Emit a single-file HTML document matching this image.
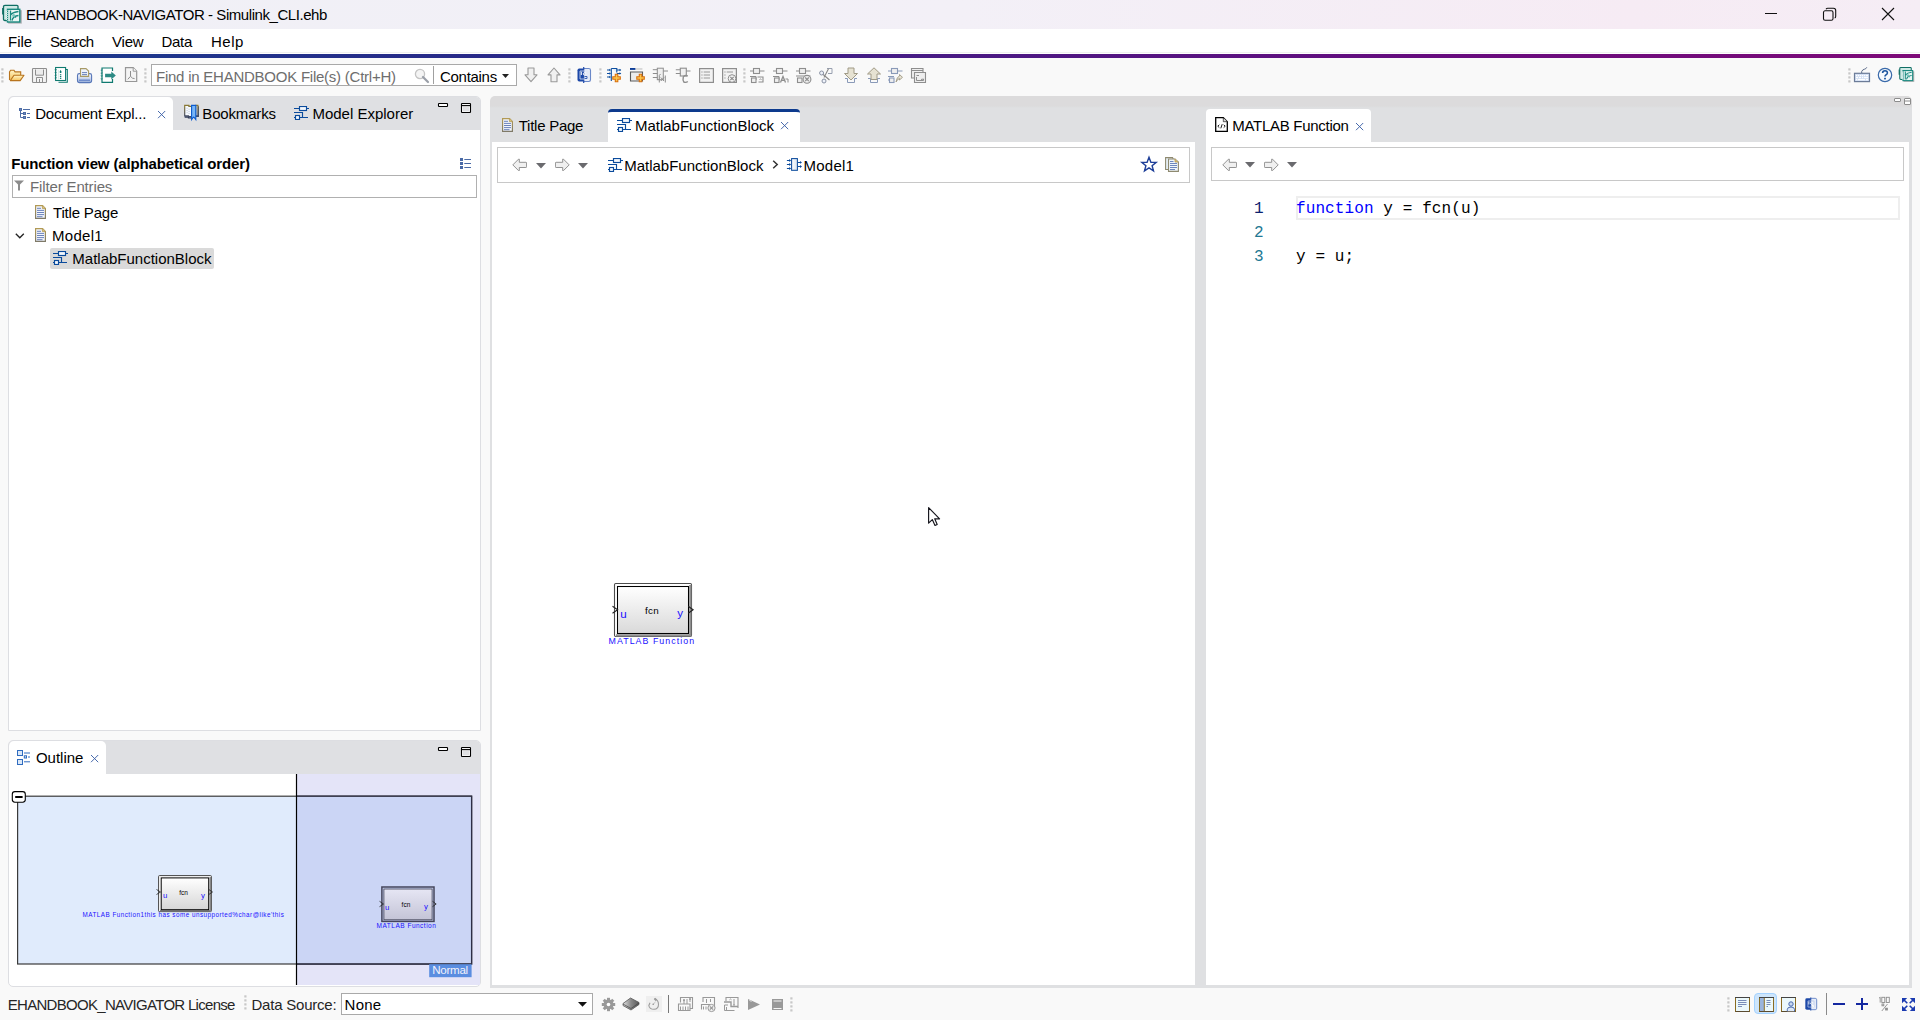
<!DOCTYPE html>
<html><head><meta charset="utf-8">
<style>
*{box-sizing:border-box;margin:0;padding:0}
html,body{width:1920px;height:1020px;overflow:hidden;background:#f9f9f9;font-family:"Liberation Sans",sans-serif;color:#000;position:relative}
.a{position:absolute}
.t{position:absolute;white-space:nowrap;line-height:15px;font-size:15px}
.ic{position:absolute;overflow:visible}
.code{font-family:"Liberation Mono",monospace}
</style></head><body>
<svg width="0" height="0" style="position:absolute">
<defs>
 <symbol id="blk" viewBox="0 0 15 14">
  <g fill="none" stroke="#0b4b9c" stroke-width="1.15">
   <path d="M0 2.5H15M0 6.5H8.5V11.5M0 11.5H14"/>
   <rect x="5.5" y="0.5" width="7" height="4" fill="#f4f8fd"/>
   <rect x="1.5" y="9.5" width="4" height="4" fill="#f4f8fd"/>
  </g>
 </symbol>
 <symbol id="doc" viewBox="0 0 11 14">
  <defs><linearGradient id="docb" x1="0" y1="0" x2="0" y2="1"><stop offset="0" stop-color="#b29a55"/><stop offset="1" stop-color="#7f7a68"/></linearGradient></defs>
  <path d="M0.6 0.6H7.6L10.4 3.4V13.4H0.6Z" fill="#f3f6fc" stroke="url(#docb)" stroke-width="1.2"/>
  <path d="M7.4 0.6V3.6H10.4" fill="#d9c07a" stroke="#b29a55" stroke-width="0.8"/>
  <g stroke="#5a74b2" stroke-width="0.9"><path d="M2 3.3H6M2 5.4H9M2 7.5H9M2 9.6H9M2 11.7H7.5"/></g>
 </symbol>
 <symbol id="xcl" viewBox="0 0 9 9">
  <path d="M1 1L8.2 8.2M8.2 1L1 8.2" stroke="#3d62a8" stroke-width="0.95" fill="none"/>
 </symbol>
 <symbol id="minb" viewBox="0 0 12 6">
  <rect x="1.5" y="1.5" width="9" height="3" rx="0.6" fill="#fff" stroke="#000" stroke-width="1.1"/>
 </symbol>
 <symbol id="maxb" viewBox="0 0 12 12">
  <rect x="1.5" y="1.5" width="9" height="9" rx="0.6" fill="none" stroke="#000" stroke-width="1.1"/>
  <rect x="2.5" y="4.5" width="7" height="5" fill="none" stroke="#fff" stroke-width="0.6"/>
  <path d="M2.3 2.5H9.7" stroke="#fff" stroke-width="0.7"/>
  <path d="M1.5 3.6H10.5" stroke="#000" stroke-width="1.1"/>
 </symbol>
 <symbol id="larr" viewBox="0 0 15 13">
  <path d="M0.8 6.9L6.6 1.1H7.3V4.3H13.9Q14.6 4.3 14.6 5V8.8Q14.6 9.5 13.9 9.5H7.3V12.7H6.6Z" fill="#f0f0f0" stroke="#8c8c8c" stroke-width="0.95" stroke-linejoin="round"/>
 </symbol>
 <symbol id="rarr" viewBox="0 0 15 13">
  <path d="M14.2 6.9L8.4 1.1H7.7V4.3H1.1Q0.4 4.3 0.4 5V8.8Q0.4 9.5 1.1 9.5H7.7V12.7H8.4Z" fill="#f0f0f0" stroke="#8c8c8c" stroke-width="0.95" stroke-linejoin="round"/>
 </symbol>
 <symbol id="tri" viewBox="0 0 10 6">
  <path d="M0 0H10L5 5.5Z" fill="#6a6a6e"/>
 </symbol>
 <symbol id="grip" viewBox="0 0 3 15">
  <g fill="#c8c8c8"><rect x="0.3" y="0.3" width="2.2" height="2.2"/><rect x="0.3" y="4.3" width="2.2" height="2.2"/><rect x="0.3" y="8.3" width="2.2" height="2.2"/><rect x="0.3" y="12.3" width="2.2" height="2.2"/></g>
 </symbol>
 <symbol id="app" viewBox="0 0 24 24">
  <path d="M3.5 5.8Q3.5 4.3 5 4.3H17Q18 4.3 18 5.3V19.5H5Q3.5 19.5 3.5 18Z" fill="#cfe9e5" stroke="#0f6e64" stroke-width="1.3"/>
  <path d="M2.8 7V13.5" stroke="#0f6e64" stroke-width="1.4"/>
  <rect x="8.2" y="9.2" width="13.6" height="13.4" fill="#000" opacity="0.28"/>
  <rect x="7.5" y="8.3" width="12.3" height="12.7" fill="#e8f5f3" stroke="#1a8a80" stroke-width="1.4"/>
  <path d="M7.5 9.5L6.3 10.5L7.5 11.5L6.3 12.5L7.5 13.5L6.3 14.5L7.5 15.5L6.3 16.5L7.5 17.5L6.3 18.5L7.5 19.5" fill="none" stroke="#fff" stroke-width="0.9"/>
  <path d="M10.5 9.5V19.5M10.5 14Q13 11 18.5 10.5M12 19.5Q13 15 18.5 14.5M13.5 14.3L16 16.5" stroke="#1a8a80" stroke-width="1.3" fill="none"/>
  <circle cx="13.7" cy="14.5" r="1.6" fill="#7cc4bb"/>
 </symbol>
</defs></svg>
<!-- TITLE BAR -->
<div class="a" style="left:0;top:0;width:1920px;height:29px;background:linear-gradient(90deg,#f0f0f6 0%,#f3f0f7 50%,#f6ebf4 85%,#f5edf5 100%)"></div>
<div class="t" style="left:26px;top:7.3px;letter-spacing:-0.44px">EHANDBOOK-NAVIGATOR - Simulink_CLI.ehb</div>
<svg class="ic" style="left:0px;top:1px" width="24" height="24"><use href="#app"/></svg>
<div class="a" style="left:1765px;top:13px;width:12px;height:1px;background:#111"></div>
<svg class="ic" style="left:1822px;top:7px" width="15" height="15" viewBox="0 0 15 15"><rect x="1.5" y="3.8" width="9.5" height="9.5" rx="1.6" fill="none" stroke="#111" stroke-width="1.1"/><path d="M4 2.2Q4.5 1.3 5.8 1.3H11.5Q13.7 1.3 13.7 3.5V9.2Q13.7 10.6 12.7 11.1" fill="none" stroke="#111" stroke-width="1.1"/></svg>
<svg class="ic" style="left:1881px;top:7px" width="14" height="14" viewBox="0 0 14 14"><path d="M1 1L13 13M13 1L1 13" stroke="#111" stroke-width="1.1"/></svg>
<!-- MENU -->
<div class="a" style="left:0;top:29px;width:1920px;height:25px;background:#fff"></div>
<div class="t" style="left:8px;top:34.3px">File</div>
<div class="t" style="left:50px;top:34.3px;letter-spacing:-0.69px">Search</div>
<div class="t" style="left:112px;top:34.3px;letter-spacing:-0.22px">View</div>
<div class="t" style="left:161.5px;top:34.3px;letter-spacing:-0.28px">Data</div>
<div class="t" style="left:211px;top:34.3px;letter-spacing:0.5px">Help</div>
<div class="a" style="left:0;top:52px;width:1920px;height:1px;background:#f0f0f0"></div>
<div class="a" style="left:0;top:54px;width:1920px;height:4px;background:linear-gradient(90deg,#1a3c8e 0%,#2a2888 27%,#4a1a84 50%,#660c7e 74%,#7e0a78 100%)"></div>

<!-- TOOLBAR -->
<div class="a" style="left:151px;top:64px;width:366px;height:22px;border:1px solid #a9a9a9;background:#fff"></div>
<div class="t" style="left:156px;top:68.6px;letter-spacing:-0.24px;color:#6e6e6e">Find in EHANDBOOK File(s) (Ctrl+H)</div>
<div class="a" style="left:433px;top:66px;width:1px;height:18px;background:#a0a0a0"></div>
<div class="t" style="left:440px;top:68.6px;letter-spacing:-0.29px">Contains</div>

<!-- TOOLBAR ICONS -->
<svg class="ic" style="left:1px;top:68px" width="3" height="15"><use href="#grip"/></svg>
<svg class="ic" style="left:8px;top:68px" width="17" height="14" viewBox="0 0 17 14"><defs><linearGradient id="fo1" x1="0" y1="0" x2="0" y2="1"><stop offset="0" stop-color="#fff6c8"/><stop offset="1" stop-color="#f6c25a"/></linearGradient></defs><path d="M1.5 12V4L2.6 2.3H6L7 3.9H12.7V7" fill="url(#fo1)" stroke="#b8741e" stroke-width="1.1"/><path d="M2.3 12.6L6 7.3H16L12.2 12.6Z" fill="url(#fo1)" stroke="#b8741e" stroke-width="1.1" stroke-linejoin="round"/></svg>
<svg class="ic" style="left:31px;top:67px" width="17" height="17" viewBox="0 0 17 17"><path d="M2.3 1.5H14.7Q15.5 1.5 15.5 2.3V14.7Q15.5 15.5 14.7 15.5H2.3Q1.5 15.5 1.5 14.7V2.3Q1.5 1.5 2.3 1.5Z" fill="#f3f3f3" stroke="#8e8e8e" stroke-width="1.1"/><path d="M4.5 2.5V8.2H12.5V2.5" fill="#ececec" stroke="#8e8e8e" stroke-width="1"/><path d="M5.5 15.3V10.5H11.5V15.3M8.5 12V15.3" fill="none" stroke="#8e8e8e" stroke-width="1"/></svg>
<svg class="ic" style="left:53px;top:66px" width="17" height="18" viewBox="0 0 17 18"><path d="M5 3.5H14.3V16.3H5.5" fill="#fff" stroke="#0f7a70" stroke-width="1.1"/><rect x="2.6" y="1.5" width="10" height="13" fill="#fff" stroke="#0f7a70" stroke-width="1.1"/><g fill="#0f7a70"><path d="M1.3 3.8L3.8 3L3 5ZM1.3 6.5L3.8 5.7L3 7.7ZM1.3 9.2L3.8 8.4L3 10.4ZM1.3 11.9L3.8 11.1L3 13.1Z"/><path d="M6.8 5.5L7.6 3.8L8.4 5.5V7H6.8Z"/><rect x="6.9" y="8.2" width="1.4" height="1.1"/><rect x="6.9" y="10" width="1.4" height="1.1"/><rect x="6.9" y="11.8" width="1.4" height="1.1"/></g><path d="M5.4 4V13.5" stroke="#cfe6e2" stroke-width="0.8"/></svg>
<svg class="ic" style="left:76px;top:67px" width="17" height="17" viewBox="0 0 17 17"><defs><linearGradient id="pr1" x1="0" y1="0" x2="0" y2="1"><stop offset="0" stop-color="#fbfcff"/><stop offset="1" stop-color="#9fb4dc"/></linearGradient></defs><path d="M1.5 8.5Q1.5 6.6 3.3 6.6H13.8Q15.6 6.6 15.6 8.5V13.5Q15.6 15.6 13.5 15.6H3.6Q1.5 15.6 1.5 13.5Z" fill="url(#pr1)" stroke="#5877b8" stroke-width="1.1"/><path d="M3 13.3H14" stroke="#6f8dcc" stroke-width="1.6"/><path d="M4.5 9.4V1.6H10L12.6 4V9.4Z" fill="#eef3fc" stroke="#a89a66" stroke-width="1.1"/><path d="M6 5.6H11M6 7.6H11" stroke="#5a74b2" stroke-width="0.9"/></svg>
<svg class="ic" style="left:99px;top:66px" width="18" height="18" viewBox="0 0 18 18"><path d="M13.5 5V2H3V16.3H13.5V13" fill="#fff" stroke="#0f7a70" stroke-width="1.2"/><g fill="#2c8a84"><path d="M1.3 4L3.7 3.3L3 5.3ZM1.3 6.9L3.7 6.2L3 8.2ZM1.3 9.8L3.7 9.1L3 11.1ZM1.3 12.7L3.7 12L3 14Z"/><path d="M6.1 7.8H12.3V5.6L16.8 9.5L12.3 13.4V11.3H6.1Z"/></g></svg>
<svg class="ic" style="left:124px;top:66px" width="14" height="17" viewBox="0 0 14 17"><path d="M1.5 1.7H9.2L12.7 5.2V15.5H1.5Z" fill="#f4f4f4" stroke="#979797" stroke-width="1.2"/><path d="M9.2 1.7V5.2H12.7" fill="#fff" stroke="#979797" stroke-width="1"/><path d="M6.5 5V10.3L3.8 13.3M6.5 10.3L8.5 12.2L10.6 12.6" fill="none" stroke="#8f8f8f" stroke-width="1"/></svg>
<svg class="ic" style="left:144px;top:68px" width="3" height="15"><use href="#grip"/></svg>
<svg class="ic" style="left:413px;top:67px" width="17" height="17" viewBox="0 0 17 17"><circle cx="7" cy="7" r="4.6" fill="#f4f4f4" stroke="#c4c4c4" stroke-width="1.3"/><path d="M10 10L15 15" stroke="#9a9fa8" stroke-width="2.2" stroke-linecap="round"/></svg>
<svg class="ic" style="left:502px;top:74px" width="7" height="4" viewBox="0 0 7 4"><path d="M0 0H7L3.5 4Z" fill="#222"/></svg>
<svg class="ic" style="left:524px;top:67px" width="14" height="16" viewBox="0 0 14 16"><path d="M4 1H10V7.8H13L7 14.7L1 7.8H4Z" fill="#f0f0f0" stroke="#9a9a9a" stroke-width="1.1" stroke-linejoin="round"/></svg>
<svg class="ic" style="left:547px;top:67px" width="14" height="16" viewBox="0 0 14 16"><path d="M4 14.7H10V7.9H13L7 1L1 7.9H4Z" fill="#f0f0f0" stroke="#9a9a9a" stroke-width="1.1" stroke-linejoin="round"/></svg>
<svg class="ic" style="left:568px;top:68px" width="3" height="15"><use href="#grip"/></svg>
<svg class="ic" style="left:576px;top:66px" width="16" height="18" viewBox="0 0 16 18"><path d="M7.5 2.5H3.2Q1.5 2.5 1.5 4.2V13.8Q1.5 15.5 3.2 15.5H7.5Z" fill="#1c48a8"/><path d="M8 2.5H12.8Q14.5 2.5 14.5 4.2V13.8Q14.5 15.5 12.8 15.5H8" fill="#e6ecf8" stroke="#6a88c8" stroke-width="1.1"/><path d="M7.7 1V17" stroke="#1c48a8" stroke-width="1.2"/><path d="M4 5H11.8V13H4Z" fill="none" stroke="#dfe6f5" stroke-width="0.8"/><path d="M5.3 5.8V9M9.8 7Q8.2 6 7.3 7.5Q7.2 9 8.8 9.2" fill="none" stroke="#fff" stroke-width="1"/><path d="M8.6 10.5H11V12.5H8.6" fill="none" stroke="#2a56b0" stroke-width="0.9"/></svg>
<svg class="ic" style="left:599px;top:68px" width="3" height="15"><use href="#grip"/></svg>
<svg class="ic" style="left:606px;top:67px" width="17" height="17" viewBox="0 0 17 17"><path d="M5.3 1.5V14M5.3 1.5H10.8V5.5" fill="#e4eef8" stroke="#0d4ea0" stroke-width="1.1"/><g stroke="#0d4ea0" stroke-width="1.1"><path d="M1 3H4M1 6.5H4M1 10H4M10.8 3H14.5M10.8 6.5H14.5"/></g><g fill="#0d4ea0"><path d="M3.3 1.8L5 3L3.3 4.2ZM3.3 5.3L5 6.5L3.3 7.7ZM3.3 8.8L5 10L3.3 11.2ZM13.5 1.8L15.3 3L13.5 4.2ZM13.5 5.3L15.3 6.5L13.5 7.7Z"/></g><path d="M9.3 7.3H11.8V9.8H14.3V12.3H11.8V14.8H9.3V12.3H6.8V9.8H9.3Z" fill="#fbc64c" stroke="#d9700e" stroke-width="1.1"/></svg>
<svg class="ic" style="left:629px;top:67px" width="17" height="17" viewBox="0 0 17 17"><path d="M1.5 5V14H13.5V5Z" fill="#ececec" stroke="#5a5a5a" stroke-width="1.1"/><rect x="1" y="1" width="5.6" height="1.9" fill="#0d3e98"/><rect x="6.6" y="1" width="6.8" height="1.9" fill="#d8d8d8"/><path d="M10.3 7.3H12.8V9.8H15.3V12.3H12.8V14.8H10.3V12.3H7.8V9.8H10.3Z" fill="#fbc64c" stroke="#d9700e" stroke-width="1.1"/></svg>
<svg class="ic" style="left:652px;top:67px" width="17" height="17" viewBox="0 0 17 17"><g fill="none" stroke="#8e8e8e" stroke-width="1"><rect x="5.3" y="1.2" width="6" height="11.5" fill="#f0f0f0"/><path d="M0.8 2.7H5.3M0.8 6.5H5.3M0.8 10.5H5.3M11.3 4H16M7.3 15.5V8.5L8.5 7M13.3 15.5V8.5"/><path d="M8.8 10.5L12 14M12 10.5L8.8 14"/></g></svg>
<svg class="ic" style="left:675px;top:67px" width="17" height="17" viewBox="0 0 17 17"><g fill="none" stroke="#8e8e8e" stroke-width="1.1"><rect x="5.3" y="1.2" width="6" height="7.8" fill="#f0f0f0"/><path d="M0.8 2.7H5.3M0.8 6.5H5.3M11.3 4H15.5"/><path d="M12.8 9Q9.5 7.5 8.3 10Q7.5 13.5 8.8 15Q11 16 12.8 14.5" stroke-width="1.4"/></g></svg>
<svg class="ic" style="left:698px;top:67px" width="17" height="17" viewBox="0 0 17 17"><rect x="1.6" y="1.6" width="13.8" height="13.8" fill="#f2f2f2" stroke="#8e8e8e" stroke-width="1.2"/><path d="M3.3 5H4.6M5.7 5H12M3.3 8H4.6M5.7 8H12M3.3 11H4.6M5.7 11H12" stroke="#8e8e8e" stroke-width="0.9"/></svg>
<svg class="ic" style="left:721px;top:67px" width="17" height="17" viewBox="0 0 17 17"><rect x="1.6" y="1.6" width="13.8" height="13.8" fill="#f2f2f2" stroke="#8e8e8e" stroke-width="1.2"/><path d="M3.3 5H4.6M5.7 5H12M3.3 8H4.6M3.3 11H4.6" stroke="#8e8e8e" stroke-width="0.9"/><circle cx="11" cy="11.5" r="3.8" fill="#f4f4f4" stroke="#8e8e8e" stroke-width="1"/><path d="M9.3 9.8L12.7 13.2M12.7 9.8L9.3 13.2" stroke="#8e8e8e" stroke-width="1.2"/></svg>
<svg class="ic" style="left:743px;top:68px" width="3" height="15"><use href="#grip"/></svg>
<svg class="ic" style="left:749px;top:67px" width="17" height="17" viewBox="0 0 17 17"><g fill="none" stroke="#8e8e8e" stroke-width="1.1"><path d="M1 4H4.5M10.5 4H15.5M1 9.5H7M7 9.5V13"/><rect x="4.5" y="1.5" width="6" height="5" fill="#efefef"/><rect x="2.5" y="11" width="4.5" height="4.5" fill="#efefef"/></g><path d="M8.5 10H14V15H9.5" fill="none" stroke="#8e8e8e" stroke-width="1.1"/><path d="M10.5 12.5Q11.5 11.5 12.5 12.5" stroke="#8e8e8e" fill="none"/></svg>
<svg class="ic" style="left:772px;top:67px" width="17" height="17" viewBox="0 0 17 17"><g fill="none" stroke="#8e8e8e" stroke-width="1.1"><path d="M1 4H4.5M10.5 4H15.5M1 9.5H7M7 9.5V13"/><rect x="4.5" y="1.5" width="6" height="5" fill="#efefef"/><rect x="2.5" y="11" width="4.5" height="4.5" fill="#efefef"/></g><path d="M8.5 15.5L11 9.5L13.5 15.5M9.5 13.3H12.5" fill="none" stroke="#8e8e8e" stroke-width="1.3"/><path d="M13.5 12H16V15.5" stroke="#8e8e8e" fill="none"/></svg>
<svg class="ic" style="left:795px;top:67px" width="17" height="17" viewBox="0 0 17 17"><g fill="none" stroke="#8e8e8e" stroke-width="1.1"><path d="M1 4H4.5M10.5 4H15.5M1 9H15.5"/><rect x="4.5" y="1.5" width="6" height="5" fill="#efefef"/><rect x="2.5" y="11" width="4.5" height="4.5" fill="#efefef"/></g><circle cx="12" cy="12.3" r="3.9" fill="#eee" stroke="#8e8e8e" stroke-width="1.1"/><path d="M10.2 10.5L13.8 14.1M13.8 10.5L10.2 14.1" stroke="#8e8e8e" stroke-width="1.2"/></svg>
<svg class="ic" style="left:818px;top:67px" width="17" height="17" viewBox="0 0 17 17"><path d="M9 1.5H14V6.5M14 6.5H10" fill="none" stroke="#98a0b0" stroke-width="1"/><path d="M10.5 1.8L6 10.5M4 6.5L11.5 13" stroke="#8a8a8a" stroke-width="1.1"/><circle cx="3.6" cy="6" r="2" fill="#eef2fa" stroke="#8a92a4" stroke-width="1"/><circle cx="6" cy="14" r="2" fill="#eef2fa" stroke="#8a92a4" stroke-width="1"/></svg>
<svg class="ic" style="left:843px;top:67px" width="16" height="17" viewBox="0 0 16 17"><path d="M2 11.5H4.5M11.5 11.5H14M4.5 11.5V15.5H11.5V11.5" fill="none" stroke="#8a9ab8" stroke-width="1"/><path d="M5 1H11V6.5H14.5L8 13L1.5 6.5H5Z" fill="#e6e2d2" stroke="#a09a86" stroke-width="1"/></svg>
<svg class="ic" style="left:866px;top:67px" width="16" height="17" viewBox="0 0 16 17"><path d="M2 11.5H4.5M11.5 11.5H14M4.5 11.5V15.5H11.5V11.5" fill="none" stroke="#8a9ab8" stroke-width="1"/><path d="M5 12.5H11V7H14.5L8 0.8L1.5 7H5Z" fill="#e6e2d2" stroke="#a09a86" stroke-width="1"/></svg>
<svg class="ic" style="left:887px;top:67px" width="17" height="17" viewBox="0 0 17 17"><g fill="none" stroke="#8a9ab8" stroke-width="1.1"><path d="M1 4H4.5M10.5 4H15.5M1 9.5H7M1 13H2.5"/><rect x="4.5" y="1.5" width="6" height="5" fill="#efefef"/><rect x="2.5" y="11" width="4.5" height="4.5" fill="#efefef"/></g><path d="M9 15Q10 9.5 12.5 9V7.5L15.5 10.3L12.5 13V11.5Q10.5 12 9 15Z" fill="#e6e2d2" stroke="#a09a86" stroke-width="0.9"/></svg>
<svg class="ic" style="left:910px;top:67px" width="17" height="17" viewBox="0 0 17 17"><path d="M1.5 1.5H13V11H1.5Z" fill="#efefef" stroke="#8e8e8e" stroke-width="1.1"/><path d="M1.5 3.5H13" stroke="#8e8e8e" stroke-width="1"/><path d="M4.5 5.5H15.5V15.5H4.5Z" fill="#eeeeee" stroke="#8e8e8e" stroke-width="1.1"/><path d="M6.5 8.5H9M6.5 10V13.5H13.5V12L11 12.5" fill="none" stroke="#8e8e8e" stroke-width="1"/></svg>
<!-- right toolbar -->
<svg class="ic" style="left:1897px;top:64px" width="19" height="19" viewBox="0 0 24 24"><use href="#app"/></svg>
<svg class="ic" style="left:1848px;top:68px" width="3" height="15"><use href="#grip"/></svg>
<svg class="ic" style="left:1853px;top:66px" width="18" height="17" viewBox="0 0 18 17"><path d="M8.7 7V5.5Q9.5 3.5 11.5 3.2Q13 3 13.8 1.3" fill="none" stroke="#5a6a88" stroke-width="1"/><rect x="1.5" y="7.3" width="15" height="8.3" fill="#d4e0f4" stroke="#6c7c98" stroke-width="1.2"/><g fill="#fff"><rect x="3" y="9" width="1.2" height="1.2"/><rect x="5" y="9" width="1.2" height="1.2"/><rect x="7" y="9" width="1.2" height="1.2"/><rect x="9" y="9" width="1.2" height="1.2"/><rect x="11" y="9" width="1.2" height="1.2"/><rect x="13" y="9" width="2" height="1.2"/><rect x="3" y="11" width="2" height="1.2"/><rect x="6" y="11" width="2" height="1.2"/><rect x="9" y="11" width="1.2" height="1.2"/><rect x="11" y="11" width="4" height="1.2"/><rect x="3" y="13" width="1.2" height="1.2"/><rect x="5" y="13" width="7" height="1.2"/><rect x="13" y="13" width="2" height="1.2"/></g></svg>
<svg class="ic" style="left:1877px;top:67px" width="16" height="16" viewBox="0 0 16 16"><circle cx="8" cy="8" r="6.7" fill="#f6f9fd" stroke="#3a6aaa" stroke-width="1.2"/><path d="M5.6 6.1Q5.6 3.8 8 3.8Q10.5 3.8 10.4 6Q10.3 7.3 8.8 8Q8 8.4 8 9.6" fill="none" stroke="#1e56a0" stroke-width="1.6"/><rect x="7.1" y="10.8" width="1.8" height="1.6" fill="#1e56a0"/></svg>
<!-- LEFT PANEL -->
<div class="a" style="left:8px;top:96px;width:473px;height:635px;background:#fff;border:1px solid #dddee2;border-radius:5px 5px 0 0;overflow:hidden">
  <div class="a" style="left:0;top:0;width:473px;height:33px;background:#dfe0e3"></div>
  <div class="a" style="left:0;top:0;width:164px;height:33px;background:#fff;border-radius:5px 5px 0 0"></div>
</div>
<div class="t" style="left:35.2px;top:106.3px;letter-spacing:-0.2px">Document Expl...</div>
<div class="t" style="left:202.3px;top:106.3px;letter-spacing:-0.17px">Bookmarks</div>
<div class="t" style="left:312.4px;top:106.3px">Model Explorer</div>
<div class="t" style="left:11.2px;top:156.1px;font-weight:bold;letter-spacing:-0.14px">Function view (alphabetical order)</div>
<div class="a" style="left:12px;top:175px;width:465px;height:23px;border:1px solid #b0b0b0;background:#fff"></div>
<div class="t" style="left:30.1px;top:179.3px;letter-spacing:-0.15px;color:#6e6e6e">Filter Entries</div>
<div class="t" style="left:53px;top:204.9px;letter-spacing:-0.18px">Title Page</div>
<div class="t" style="left:52px;top:228.3px;letter-spacing:0.3px">Model1</div>
<div class="a" style="left:50px;top:248px;width:164px;height:21px;background:#dadada;border-radius:2px"></div>
<div class="t" style="left:72.3px;top:251.3px">MatlabFunctionBlock</div>

<!-- OUTLINE PANEL -->
<div class="a" style="left:8px;top:740px;width:473px;height:247px;background:#fff;border:1px solid #dddee2;border-radius:5px;overflow:hidden">
  <div class="a" style="left:0;top:0;width:473px;height:33px;background:#dfe0e3"></div>
  <div class="a" style="left:0;top:0;width:97px;height:33px;background:#fff;border-radius:5px 5px 0 0"></div>
</div>
<div class="t" style="left:35.9px;top:750.3px">Outline</div>

<!-- EDITOR AREA -->
<div class="a" style="left:490px;top:96px;width:1422px;height:892px;background:linear-gradient(180deg,#dcdbdc 0px,#dcdbdc 10px,#dfe0e2 12px);border-radius:5px 5px 0 0"></div>
<div class="a" style="left:492px;top:142px;width:703px;height:843px;background:#fff"></div>
<div class="a" style="left:608px;top:109px;width:192px;height:33px;background:#fff;border-top:3px solid #0d3a8d;border-radius:4px 4px 0 0"></div>
<div class="t" style="left:518.7px;top:117.8px;letter-spacing:-0.25px">Title Page</div>
<div class="t" style="left:634.9px;top:117.8px">MatlabFunctionBlock</div>
<div class="a" style="left:497px;top:147px;width:693px;height:36px;border:1px solid #c8c8c8"></div>
<div class="t" style="left:624.2px;top:157.5px">MatlabFunctionBlock</div>
<div class="t" style="left:803.4px;top:157.5px;letter-spacing:0.27px">Model1</div>

<div class="a" style="left:1206px;top:142px;width:703px;height:843px;background:#fff"></div>
<div class="a" style="left:1206px;top:109px;width:165px;height:33px;background:#fff;border-radius:4px 4px 0 0"></div>
<div class="t" style="left:1232.2px;top:118.4px;letter-spacing:-0.28px">MATLAB Function</div>
<div class="a" style="left:1211px;top:147px;width:693px;height:34px;border:1px solid #c8c8c8"></div>

<!-- CODE -->
<div class="a" style="left:1296px;top:196px;width:604px;height:24px;border:2px solid #eeeeee"></div>
<div class="t code" style="left:1254px;top:201.3px;font-size:16px;line-height:16px;color:#0b216f">1</div>
<div class="t code" style="left:1254px;top:224.9px;font-size:16px;line-height:16px;color:#237893">2</div>
<div class="t code" style="left:1254px;top:248.6px;font-size:16px;line-height:16px;color:#237893">3</div>
<div class="t code" style="left:1296px;top:201.3px;font-size:16px;line-height:16px;letter-spacing:0.1px"><span style="color:#0000ff">function</span> y = fcn(u)</div>
<div class="t code" style="left:1296px;top:248.6px;font-size:16px;line-height:16px;letter-spacing:0.1px">y = u;</div>
<!-- SIMULINK BLOCK CENTER -->
<svg class="ic" style="left:600px;top:575px" width="100" height="75" viewBox="600 575 100 75">
 <defs><linearGradient id="bg1" x1="0" y1="0" x2="0" y2="1"><stop offset="0" stop-color="#ffffff"/><stop offset="1" stop-color="#d9d9d9"/></linearGradient></defs>
 <rect x="614.5" y="583.5" width="77" height="53" rx="1.2" fill="#fff" stroke="#4d4d4d" stroke-width="1.1"/>
 <path d="M690.3 585V635.3H616" fill="none" stroke="#8f8f8f" stroke-width="2.2"/>
 <rect x="617.5" y="586.5" width="71" height="47" fill="url(#bg1)" stroke="#000" stroke-width="1.05"/>
 <path d="M612.5 606.3L617.6 609.8L612.5 613.3" fill="none" stroke="#222" stroke-width="1.1"/>
 <path d="M688.2 606.3L693.1 609.8L688.2 613.3" fill="none" stroke="#222" stroke-width="1.1"/>
 <text x="645" y="613.6" font-family="Liberation Sans" font-size="9.8" fill="#000" letter-spacing="0.3">fcn</text>
 <text x="620.3" y="617.6" font-family="Liberation Sans" font-size="11.6" fill="#2010ff">u</text>
 <text x="677.3" y="616.6" font-family="Liberation Sans" font-size="11.6" fill="#2010ff">y</text>
 <text x="608.6" y="643.7" font-family="Liberation Sans" font-size="8.8" fill="#2010ff" letter-spacing="1.05">MATLAB Function</text>
</svg>
<!-- CURSOR -->
<svg class="ic" style="left:926px;top:505px" width="16" height="23" viewBox="0 0 16 23"><path d="M2.6 2.6V18.2L6.3 14.6L9 20.4L11.2 19.4L8.7 13.8H13.6Z" fill="#fff" stroke="#15151c" stroke-width="1.15" stroke-linejoin="round"/></svg>
<!-- OUTLINE DIAGRAM -->
<svg class="ic" style="left:9px;top:774px" width="471" height="211" viewBox="9 774 471 211">
 <defs>
  <linearGradient id="bg2" x1="0" y1="0" x2="0" y2="1"><stop offset="0" stop-color="#ffffff"/><stop offset="1" stop-color="#d6d6d6"/></linearGradient>
  <linearGradient id="bg3" x1="0" y1="0" x2="0" y2="1"><stop offset="0" stop-color="#e6e6f4"/><stop offset="1" stop-color="#c4c4d6"/></linearGradient>
 </defs>
 <rect x="297" y="774" width="183" height="211" fill="#e4e4f8"/>
 <rect x="17.6" y="796.2" width="454" height="167.8" fill="#e0ebfc" stroke="#3a3a3a" stroke-width="1.2"/>
 <rect x="297" y="796.8" width="174" height="166.6" fill="#cbd5f5"/>
 <path d="M297 796.2H471.6V964H297" fill="none" stroke="#2f2f45" stroke-width="1.3"/>
 <path d="M296.5 774V985" stroke="#000" stroke-width="1.2"/>
 <rect x="12.3" y="791.6" width="13" height="10.6" rx="2.6" fill="#fff" stroke="#000" stroke-width="1.1"/>
 <path d="M15.2 797H22.6" stroke="#000" stroke-width="2"/>
 <!-- block 1 -->
 <rect x="158.6" y="875.6" width="52.8" height="36" rx="0.8" fill="#fff" stroke="#444" stroke-width="1"/>
 <path d="M210.4 877V910.8H160" fill="none" stroke="#888" stroke-width="1.6"/>
 <rect x="161.2" y="877.9" width="47.5" height="31.8" fill="url(#bg2)" stroke="#000" stroke-width="1"/>
 <path d="M156.5 889.5L160.5 892L156.5 894.5M208.8 889.5L212.5 892L208.8 894.5" fill="none" stroke="#222" stroke-width="0.8"/>
 <text x="179.2" y="895" font-family="Liberation Sans" font-size="6.5" fill="#000">fcn</text>
 <text x="163" y="898.3" font-family="Liberation Sans" font-size="7.8" fill="#2010ff">u</text>
 <text x="201" y="897.5" font-family="Liberation Sans" font-size="7.8" fill="#2010ff">y</text>
 <text x="82.5" y="916.8" font-family="Liberation Sans" font-size="6.3" fill="#2010ff" letter-spacing="0.49">MATLAB Function1this has some unsupported%char@like'this</text>
 <!-- block 2 -->
 <rect x="381.9" y="887" width="52.1" height="34.4" fill="none" stroke="#44445a" stroke-width="1.5"/>
 <rect x="383.9" y="889" width="48.2" height="30.8" fill="url(#bg3)" stroke="#3e3e50" stroke-width="0.8"/>
 <path d="M379.5 901.3L383.5 904L379.5 906.7M432.5 901.3L436.2 904L432.5 906.7" fill="none" stroke="#222" stroke-width="0.8"/>
 <text x="401.6" y="907" font-family="Liberation Sans" font-size="6.5" fill="#000">fcn</text>
 <text x="385" y="910" font-family="Liberation Sans" font-size="7.8" fill="#2010ff">u</text>
 <text x="424" y="909.3" font-family="Liberation Sans" font-size="7.8" fill="#2010ff">y</text>
 <text x="376.6" y="927.8" font-family="Liberation Sans" font-size="6.5" fill="#2010ff" letter-spacing="0.5">MATLAB Function</text>
 <rect x="429.2" y="964.2" width="42.4" height="13" fill="#5a8de0"/>
 <text x="432.3" y="973.9" font-family="Liberation Sans" font-size="11.6" fill="#f2f2fb" letter-spacing="-0.3">Normal</text>
</svg>
<!-- STATUS BAR -->
<div class="t" style="left:7.75px;top:996.9px;letter-spacing:-0.7px;color:#262626">EHANDBOOK_NAVIGATOR License</div>
<div class="t" style="left:251.5px;top:996.9px;letter-spacing:-0.22px;color:#262626">Data Source:</div>
<div class="a" style="left:341px;top:993px;width:252px;height:22px;border:1px solid #a9a9a9;background:#fff"></div>
<div class="t" style="left:344.6px;top:996.9px;letter-spacing:0.23px">None</div>
<!-- ICONS: left panel -->
<svg class="ic" style="left:19px;top:108px" width="12" height="11" viewBox="0 0 12 11"><g fill="#4d6ca6"><rect x="0" y="0" width="3" height="3"/><rect x="4" y="4" width="3" height="3"/><rect x="4" y="8" width="3" height="3"/></g><g fill="#a8bcdc"><rect x="1.2" y="1.2" width="0.6" height="0.6"/><rect x="5.2" y="5.2" width="0.6" height="0.6"/><rect x="5.2" y="9.2" width="0.6" height="0.6"/></g><path d="M1.5 3V9.5H4M1.5 5.5H4M4 1.5H11M8 5.5H11M8 9.5H11" stroke="#4d6ca6" stroke-width="1" fill="none"/></svg>
<svg class="ic" style="left:157px;top:110px" width="9" height="9"><use href="#xcl"/></svg>
<svg class="ic" style="left:182px;top:102px" width="20" height="20" viewBox="0 0 20 20"><defs><linearGradient id="bkg" x1="0" y1="0" x2="0" y2="1"><stop offset="0" stop-color="#8c7a34"/><stop offset="1" stop-color="#404a66"/></linearGradient></defs><path d="M16.3 4.3V14.3H10" fill="none" stroke="#3f4b68" stroke-width="1.3"/><path d="M3.3 14.3V15H6.5V15.8H10" fill="none" stroke="#303a58" stroke-width="1.3"/><path d="M2.7 3.4H6.9V4.3H9.6V14.5H6.5V13.8H2.7Z" fill="#f6f9fe" stroke="url(#bkg)" stroke-width="1.2"/><path d="M13.8 3.4H15.9V13.9H13.8Z" fill="#f6f9fe" stroke="url(#bkg)" stroke-width="1.2"/><path d="M4.3 6.3H6M6.2 7.3H8M4.3 8.5H6M6.2 9.5H8M4.3 10.6H6M6.2 11.5H8" stroke="#c9d2e0" stroke-width="0.7"/><path d="M9.6 3.4H13.8V17.6L12.2 15.4L11.7 15.2L11.2 15.4L9.6 17.6Z" fill="#78b6f8" stroke="#0d5cd0" stroke-width="1.1"/></svg>
<svg class="ic" style="left:294px;top:106px" width="15" height="14"><use href="#blk"/></svg>
<svg class="ic" style="left:437px;top:102px" width="12" height="6"><use href="#minb"/></svg>
<svg class="ic" style="left:460px;top:102px" width="12" height="12"><use href="#maxb"/></svg>
<svg class="ic" style="left:460px;top:158px" width="12" height="11" viewBox="0 0 12 11"><g fill="#4a6aa6"><rect x="0" y="0" width="3" height="3"/><rect x="0" y="4" width="3" height="3"/><rect x="0" y="8" width="3" height="3"/><rect x="4.3" y="1" width="6.7" height="1"/><rect x="4.3" y="5" width="6.7" height="1"/><rect x="4.3" y="9" width="6.7" height="1"/></g></svg>
<svg class="ic" style="left:14px;top:180px" width="10" height="11" viewBox="0 0 10 11"><path d="M0 0.5H10L6 4.5V10.5H4V4.5Z" fill="#8b8b8b"/></svg>
<svg class="ic" style="left:35px;top:205px" width="11" height="14"><use href="#doc"/></svg>
<svg class="ic" style="left:35px;top:228px" width="11" height="14"><use href="#doc"/></svg>
<svg class="ic" style="left:15px;top:233px" width="10" height="6" viewBox="0 0 10 6"><path d="M0.8 0.8L4.8 4.8L8.8 0.8" fill="none" stroke="#222" stroke-width="1.3"/></svg>
<svg class="ic" style="left:53px;top:251px" width="15" height="14"><use href="#blk"/></svg>
<!-- outline tab -->
<svg class="ic" style="left:17px;top:750px" width="14" height="15" viewBox="0 0 14 15"><g fill="#dbe8f8" stroke="#2f6cc0" stroke-width="1"><rect x="0.5" y="0.5" width="5" height="5"/><rect x="0.5" y="9.5" width="5" height="5"/><rect x="7.3" y="5.8" width="2.2" height="2.2"/></g><path d="M7 3H13M11 7H13M7 11.8H13" stroke="#2f6cc0" stroke-width="1"/></svg>
<svg class="ic" style="left:90px;top:754px" width="9" height="9"><use href="#xcl"/></svg>
<svg class="ic" style="left:437px;top:746px" width="12" height="6"><use href="#minb"/></svg>
<svg class="ic" style="left:460px;top:746px" width="12" height="12"><use href="#maxb"/></svg>
<!-- center tabs -->
<svg class="ic" style="left:502px;top:118px" width="11" height="14"><use href="#doc"/></svg>
<svg class="ic" style="left:617px;top:118px" width="15" height="14"><use href="#blk"/></svg>
<svg class="ic" style="left:780px;top:121px" width="9" height="9"><use href="#xcl"/></svg>
<svg class="ic" style="left:512px;top:158px" width="15" height="13"><use href="#larr"/></svg>
<svg class="ic" style="left:535.5px;top:162.5px" width="10" height="6"><use href="#tri"/></svg>
<svg class="ic" style="left:554.5px;top:158px" width="15" height="13"><use href="#rarr"/></svg>
<svg class="ic" style="left:577.5px;top:162.5px" width="10" height="6"><use href="#tri"/></svg>
<svg class="ic" style="left:608px;top:158px" width="15" height="14"><use href="#blk"/></svg>
<svg class="ic" style="left:771.5px;top:160px" width="7" height="9" viewBox="0 0 7 9"><path d="M1.2 0.8L5.2 4.5L1.2 8.2" fill="none" stroke="#333" stroke-width="1.5"/></svg>
<svg class="ic" style="left:786px;top:157px" width="17" height="15" viewBox="0 0 17 15"><defs><linearGradient id="mdg" x1="0" y1="0" x2="1" y2="0"><stop offset="0" stop-color="#fff"/><stop offset="1" stop-color="#d8e4f0"/></linearGradient></defs><rect x="5.6" y="1.6" width="5.8" height="11.7" fill="url(#mdg)" stroke="#0b4b9c" stroke-width="1.05"/><g stroke="#0b4b9c" stroke-width="1.05"><path d="M0.9 3.5H4M0.9 7.5H4M0.9 11.5H4M11.9 5.4H14.5M11.9 9.5H14.5"/></g><g fill="#0b4b9c"><path d="M3.2 2.1L5.1 3.5L3.2 4.9ZM3.2 6.1L5.1 7.5L3.2 8.9ZM3.2 10.1L5.1 11.5L3.2 12.9ZM14 4L16 5.4L14 6.8ZM14 8.1L16 9.5L14 10.9Z"/></g></svg>
<svg class="ic" style="left:1141px;top:156px" width="16" height="16" viewBox="0 0 16 16"><path d="M8 1.2L9.9 6.2L15.2 6.4L11.1 9.7L12.5 14.9L8 11.9L3.5 14.9L4.9 9.7L0.8 6.4L6.1 6.2Z" fill="#fff" stroke="#1e3f99" stroke-width="1.4" stroke-linejoin="miter"/></svg>
<svg class="ic" style="left:1165px;top:157px" width="14" height="15" viewBox="0 0 14 15"><path d="M0.6 0.6H7.5L8 1.5V12.5H0.6Z" fill="#e8f2fa" stroke="#8f8a70" stroke-width="1.1"/><path d="M3.5 2H10L13.4 5V14.4H3.5Z" fill="#eef5fb" stroke="#8f8a70" stroke-width="1.1"/><path d="M10 1.8V5H13.2" fill="#d7be78" stroke="#b59b50" stroke-width="0.8"/><path d="M5 4.5H8.5M5 6.5H12M5 8.5H12M5 10.5H12M5 12.5H10" stroke="#5d7bb5" stroke-width="0.9"/></svg>
<!-- right editor -->
<svg class="ic" style="left:1215px;top:117px" width="13" height="15" viewBox="0 0 13 15"><path d="M0.7 0.7H8.3L12.3 4.7V14.3H0.7Z" fill="#fff" stroke="#000" stroke-width="1.3"/><path d="M8.3 0.7V4.7H12.3" fill="#d8d8d8" stroke="#000" stroke-width="0.6"/><path d="M4.3 7.8L2.8 9.2L4.3 10.6M8.7 7.8L10.2 9.2L8.7 10.6M7.2 7.2L5.8 11.3" fill="none" stroke="#000" stroke-width="0.9"/></svg>
<svg class="ic" style="left:1354.5px;top:122px" width="9" height="9"><use href="#xcl"/></svg>
<svg class="ic" style="left:1221.5px;top:158px" width="15" height="13"><use href="#larr"/></svg>
<svg class="ic" style="left:1244.5px;top:162px" width="10" height="6"><use href="#tri"/></svg>
<svg class="ic" style="left:1263.5px;top:158px" width="15" height="13"><use href="#rarr"/></svg>
<svg class="ic" style="left:1286.5px;top:162px" width="10" height="6"><use href="#tri"/></svg>
<svg class="ic" style="left:1894px;top:98px" width="7" height="4" viewBox="0 0 7 4"><rect x="0.5" y="0.5" width="6" height="3" rx="0.5" fill="#fff" stroke="#8c8c8c" stroke-width="1"/></svg>
<svg class="ic" style="left:1904px;top:98px" width="7" height="7" viewBox="0 0 7 7"><rect x="0.5" y="0.5" width="6" height="6" rx="0.5" fill="#fff" stroke="#8c8c8c" stroke-width="1"/><path d="M0.5 3H6.5" stroke="#8c8c8c"/></svg>
<!-- STATUS ICONS -->
<svg class="ic" style="left:244px;top:995px" width="3" height="15"><use href="#grip"/></svg>
<svg class="ic" style="left:578px;top:1001.5px" width="9" height="5" viewBox="0 0 9 5"><path d="M0 0H9L4.5 4.8Z" fill="#111"/></svg>
<svg class="ic" style="left:601px;top:997px" width="15" height="15" viewBox="0 0 15 15"><g fill="#999999"><circle cx="7.5" cy="7.5" r="5"/><rect x="6" y="0.8" width="3" height="13.4"/><rect x="0.8" y="6" width="13.4" height="3"/><rect x="6" y="0.8" width="3" height="13.4" transform="rotate(45 7.5 7.5)"/><rect x="6" y="0.8" width="3" height="13.4" transform="rotate(-45 7.5 7.5)"/></g><circle cx="7.5" cy="7.5" r="1.8" fill="#fff"/></svg>
<svg class="ic" style="left:622px;top:997px" width="18" height="14" viewBox="0 0 18 14"><defs><linearGradient id="dk1" x1="0" y1="0" x2="1" y2="0"><stop offset="0" stop-color="#e0e0e0"/><stop offset="0.5" stop-color="#8a8a8a"/><stop offset="1" stop-color="#5a5a5a"/></linearGradient></defs><path d="M1 6.5L8.5 1L17 5.5L17 7.5L9 13L1 8.5Z" fill="url(#dk1)" stroke="#555" stroke-width="0.8" stroke-linejoin="round"/><path d="M1 7L9 11.5L17 6" fill="none" stroke="#444" stroke-width="0.7"/></svg>
<div class="a" style="left:646px;top:996px;width:16px;height:16px;background:#efefef"></div>
<svg class="ic" style="left:647px;top:997px" width="13" height="14" viewBox="0 0 13 14"><path d="M7.5 1.5Q11.5 3 11.5 7.5Q11.5 12 7 12.3Q2.5 12.3 1.8 8.5L3 5.7" fill="none" stroke="#9c9c9c" stroke-width="1.1"/><path d="M7.5 1.5L9.5 3.5" stroke="#9c9c9c" stroke-width="2"/><circle cx="6.2" cy="7.2" r="0.8" fill="#8a8a8a"/><path d="M6.2 7.2L8.5 5" stroke="#aaa" stroke-width="0.7"/></svg>
<div class="a" style="left:668px;top:995px;width:1px;height:18px;background:#777"></div>
<svg class="ic" style="left:677px;top:996px" width="17" height="16" viewBox="0 0 17 16"><path d="M3.5 6.5V1.5H15.5V12.5H13" fill="none" stroke="#999999" stroke-width="1.1"/><path d="M1.5 14.5V8H13V14.5Z" fill="none" stroke="#999999" stroke-width="1.1"/><path d="M3.5 14.5V10.5M6 14.5V10.5M8.5 14.5V10.5M11 14.5V10.5M7 3V8M10 3V8M13 3V6" stroke="#999999" stroke-width="1"/><circle cx="7" cy="4.3" r="1" fill="#999999"/><path d="M12 3H14" stroke="#999999" stroke-width="1.3"/></svg>
<svg class="ic" style="left:700px;top:996px" width="17" height="17" viewBox="0 0 17 17"><path d="M3 6V1.5H14.5V12" fill="none" stroke="#999999" stroke-width="1.1"/><path d="M1.5 13.5V8.5H10" fill="none" stroke="#999999" stroke-width="1.1"/><path d="M3.5 13.5V10.5M6 13.5V10.5M6.5 3V7M10.5 3V6" stroke="#999999" stroke-width="1"/><circle cx="11.5" cy="12" r="3.6" fill="#f2f2f2" stroke="#999999" stroke-width="1"/><path d="M9.8 10.3L13.2 13.7M13.2 10.3L9.8 13.7" stroke="#999999" stroke-width="1.2"/></svg>
<svg class="ic" style="left:723px;top:996px" width="17" height="16" viewBox="0 0 17 16"><path d="M3 5V1.5H15V12" fill="none" stroke="#999999" stroke-width="1.1"/><path d="M1 6H8V10.5H15" fill="none" stroke="#999999" stroke-width="1.4"/><path d="M1.5 14.5V9H5M1.5 14.5H11.5M3.5 14.5V11M11 3V9M10 9H12M6.5 3.8L7.5 3L8.5 3.8" fill="none" stroke="#999999" stroke-width="1"/></svg>
<svg class="ic" style="left:747px;top:998px" width="14" height="13" viewBox="0 0 14 13"><path d="M1 1V12L13 6.5Z" fill="#999999"/><path d="M2.3 2.3L4.5 3.5" stroke="#fff" stroke-width="0.7"/></svg>
<svg class="ic" style="left:771px;top:998px" width="13" height="13" viewBox="0 0 13 13"><rect x="1" y="1" width="11" height="11" fill="#999999"/><path d="M2.5 3H10.5M2.5 10.5H10.5" stroke="#fff" stroke-width="0.9"/></svg>
<svg class="ic" style="left:790px;top:997px" width="3" height="15"><use href="#grip"/></svg>
<!-- right status -->
<svg class="ic" style="left:1727px;top:997px" width="3" height="15"><use href="#grip"/></svg>
<svg class="ic" style="left:1734px;top:996px" width="17" height="17" viewBox="0 0 17 17"><rect x="1.5" y="1.5" width="14" height="14" fill="#ebf8fb" stroke="#8a6c22" stroke-width="1"/><path d="M1 1.5H16" stroke="#444" stroke-width="1"/><path d="M1.5 15.5H15.5" stroke="#5a4a30" stroke-width="1"/><path d="M4 4.5H12.5M4 6.5H12.5M4 8.5H12.5M4 10.5H8" stroke="#6b7fb0" stroke-width="0.9"/></svg>
<div class="a" style="left:1754px;top:993px;width:23px;height:21px;background:#cde5fb;border:1px solid #a4d2ff;border-radius:4px"></div>
<svg class="ic" style="left:1758px;top:996px" width="17" height="17" viewBox="0 0 17 17"><rect x="1.5" y="1.5" width="14" height="14" fill="#ebf8fb" stroke="#8a6c22" stroke-width="1"/><rect x="2" y="2" width="4" height="13" fill="#9ab4dc"/><path d="M6.3 2V15" stroke="#8a6c22" stroke-width="1"/><path d="M1 1.5H16" stroke="#444" stroke-width="1"/><path d="M1.5 15.5H15.5" stroke="#5a4a30" stroke-width="1"/><path d="M8.5 4.5H12.5M8.5 6.5H12.5M8.5 8.5H12.5M8.5 10.5H10" stroke="#6b7fb0" stroke-width="0.9"/></svg>
<svg class="ic" style="left:1780px;top:996px" width="17" height="17" viewBox="0 0 17 17"><rect x="1.5" y="1.5" width="14" height="14" fill="#ebf8fb" stroke="#8a6c22" stroke-width="1"/><path d="M1 1.5H16" stroke="#444" stroke-width="1"/><path d="M1.5 15.5H15.5" stroke="#5a4a30" stroke-width="1"/><circle cx="11" cy="8" r="2.2" fill="#c8d8f0" stroke="#4a6ab0" stroke-width="1"/><path d="M7.3 15.3V13.5Q7.3 11 11 11Q14.5 11 14.5 13.5V15.3" fill="#dce8f6" stroke="#4a6ab0" stroke-width="1"/></svg>
<svg class="ic" style="left:1804px;top:997px" width="14" height="14" viewBox="0 0 16 16"><path d="M7.5 1.5H3.2Q1.5 1.5 1.5 3.2V12.8Q1.5 14.5 3.2 14.5H7.5Z" fill="#1c48a8"/><path d="M8 1.5H12.8Q14.5 1.5 14.5 3.2V12.8Q14.5 14.5 12.8 14.5H8" fill="#e6ecf8" stroke="#6a88c8" stroke-width="1.1"/><path d="M7.7 0.5V15.5" stroke="#1c48a8" stroke-width="1.2"/><path d="M4.5 4.5H11.5V11.5H4.5Z" fill="none" stroke="#b8c8e8" stroke-width="0.8"/><path d="M5.6 5.3V8.5M10 6.3Q8.4 5.3 7.5 6.8Q7.4 8.3 9 8.5M8.8 9.8H11V11.5H8.8" fill="none" stroke="#fff" stroke-width="1"/></svg>
<div class="a" style="left:1826px;top:993px;width:1px;height:22px;background:#8a8a8a"></div>
<div class="a" style="left:1833px;top:1003px;width:12px;height:2.4px;background:#1428a0"></div>
<div class="a" style="left:1856px;top:1003px;width:12px;height:2.4px;background:#1428a0"></div>
<div class="a" style="left:1860.8px;top:998px;width:2.4px;height:12px;background:#1428a0"></div>
<svg class="ic" style="left:1878px;top:996px" width="13" height="16" viewBox="0 0 13 16"><g fill="none" stroke="#8c8c8c" stroke-width="0.9"><path d="M1 2.2L2.2 1.2V6.6"/><rect x="3.8" y="1.3" width="3" height="5.2"/><rect x="8.3" y="1.3" width="3" height="5.2"/><rect x="4" y="8" width="1.8" height="1.8"/><rect x="7.6" y="12.2" width="1.8" height="1.8"/><path d="M9.5 8L3.8 15"/></g></svg>
<svg class="ic" style="left:1901px;top:997px" width="15" height="15" viewBox="0 0 15 15"><g fill="#1a3ab0"><path d="M1 1H6.2L1 6.2Z"/><path d="M14 1H8.8L14 6.2Z"/><path d="M1 14H6.2L1 8.8Z"/><path d="M14 14H8.8L14 8.8Z"/></g><path d="M3 3L6.3 6.3M12 3L8.7 6.3M3 12L6.3 8.7M12 12L8.7 8.7" stroke="#1a3ab0" stroke-width="1.6"/></svg>
</body></html>
